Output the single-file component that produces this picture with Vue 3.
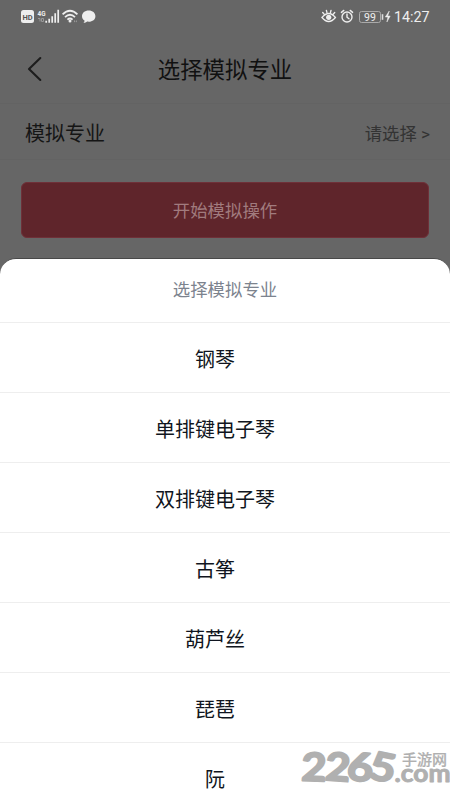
<script setup>
const options = ['钢琴', '单排键电子琴', '双排键电子琴', '古筝', '葫芦丝', '琵琶', '阮']
</script>

<template>
  <main class="screen">
    <header class="status">
      <svg class="status-left" width="76" height="16" viewBox="0 0 76 16">
        <rect x="0" y="2" width="13" height="13" rx="2.5" fill="#eee" />
        <text x="6.5" y="11.5" class="hd" text-anchor="middle">HD</text>
        <text x="16.5" y="7.5" class="net" textLength="8" lengthAdjust="spacingAndGlyphs">4G</text>
        <g fill="none" stroke="#999" stroke-width="1">
          <path d="M17 10.5h2v3M20.5 10.5h2v3h-2z" />
        </g>
        <g stroke="#eee" stroke-width="1.7">
          <path d="M25.2 14.8v-2M28.2 14.8v-4M31.2 14.8v-6.5M34.2 14.8v-9.5M37.2 14.8V1.8" />
        </g>
        <g fill="none" stroke="#eee" stroke-width="1.8">
          <path d="M41.6 6.3q7.4-7 14.8 0M44 9.1q5-4.6 10 0M46.4 11.6q2.6-2.2 5.2 0" />
        </g>
        <circle cx="49" cy="13.1" r="1.5" fill="#eee" />
        <path d="M53 12l1.5 1.2L53 14.4zM56 12l-1.2 1.2L56 14.4z" fill="#999" />
        <path d="M67.7 2.6c3.9 0 6.7 2.4 6.7 5.6s-2.8 5.5-6.7 5.5c-.5 0-1 0-1.5-.1-1 .9-2.2 1.3-3.7 1.4.8-.8 1.1-1.6 1-2.5-1.6-1-2.5-2.5-2.5-4.3 0-3.2 2.8-5.6 6.7-5.6z" fill="#eee" />
      </svg>
      <div class="status-right">
        <svg width="70" height="16" viewBox="0 0 70 16">
          <g fill="none" stroke="#eee" stroke-width="1.4" stroke-linecap="round">
            <path d="M1 9.5q6.7-8 13.4 0q-6.7 8-13.4 0zM1.7 4.5l1.4 1.6M5.4 2.4l.5 2M10 2.4l-.5 2M13.7 4.5l-1.4 1.6" />
            <circle cx="26" cy="9" r="5" />
            <path d="M26 6v3.2l2 1.6M20.4 4.4l2.4-2M31.6 4.4l-2.4-2" />
          </g>
          <circle cx="7.7" cy="9.3" r="2.6" fill="#eee" />
          <rect x="38.5" y="3.5" width="21" height="11" rx="2" fill="none" stroke="#aaa" />
          <path d="M61.5 6.2v5.6" stroke="#ddd" stroke-width="1.6" />
          <text x="49" y="12.8" class="battery" text-anchor="middle">99</text>
          <path d="M68.3 3l-4 6h2.6l-1 5 3.3-6h-2.5z" fill="#eee" stroke="#eee" stroke-width=".5" />
        </svg>
        <span class="clock">14:27</span>
      </div>
    </header>
    <nav class="nav">
      <svg class="back" width="16" height="26" viewBox="0 0 16 26">
        <path d="M13.3 2L2 13l11.3 11" fill="none" stroke="#1d1d1d" stroke-width="2.1" stroke-linecap="round" stroke-linejoin="round" />
      </svg>
      <h1>选择模拟专业</h1>
    </nav>
    <div class="field">
      <span class="label">模拟专业</span>
      <span class="value">请选择 &gt;</span>
    </div>
    <button class="start">开始模拟操作</button>
    <section class="sheet">
      <div class="sheet-title">选择模拟专业</div>
      <ul>
        <li v-for="option in options" :key="option">{{ option }}</li>
      </ul>
    </section>
    <svg class="mark" width="152" height="60" viewBox="298 740 152 60">
      <g class="digits">
        <text x="301.5" y="781" textLength="25" lengthAdjust="spacingAndGlyphs" transform="rotate(2 314 766)">2</text>
        <text x="325.5" y="781" textLength="25" lengthAdjust="spacingAndGlyphs" transform="rotate(4 338 766)">2</text>
        <text x="347.5" y="781" textLength="26" lengthAdjust="spacingAndGlyphs" transform="rotate(5 361 766)">6</text>
        <text x="370" y="781" textLength="26" lengthAdjust="spacingAndGlyphs" transform="rotate(11 383 766)">5</text>
      </g>
      <text class="site" x="402" y="765.3">手游网</text>
      <text class="domain" x="394.5" y="781.5" textLength="56" lengthAdjust="spacingAndGlyphs">.com</text>
    </svg>
  </main>
</template>

<style>
body {
  margin: 0;
  overflow: hidden;
}
</style>

<style scoped>
.screen {
  position: relative;
  display: flex;
  flex-direction: column;
  width: 450px;
  height: 800px;
  overflow: hidden;
  background: #666;
  font-family: Roboto, "Noto Sans CJK SC", sans-serif;
}
.status {
  flex: none;
  display: flex;
  justify-content: space-between;
  height: 34px;
  box-sizing: border-box;
  padding: 8px 21px 0 21px;
}
.status-right {
  display: flex;
  gap: 3px;
}
.clock {
  width: 35px;
  color: #eee;
  font-size: 14.3px;
  line-height: 19px;
  white-space: nowrap;
}
.hd {
  fill: #555;
  font: bold 7.5px Roboto, sans-serif;
}
.net {
  fill: #eee;
  font: bold 8px Roboto, sans-serif;
}
.battery {
  fill: #eee;
  font: 10.5px Roboto, sans-serif;
}
.nav {
  flex: none;
  display: grid;
  grid-template-columns: 50px 1fr 50px;
  align-items: center;
  height: 70px;
  box-sizing: border-box;
  border-bottom: 1px solid #636363;
}
.back {
  margin-left: 27px;
}
h1 {
  margin: 0;
  padding-top: 2px;
  color: #111;
  font-size: 22.4px;
  font-weight: 400;
  line-height: 30px;
  text-align: center;
}
.field {
  flex: none;
  display: flex;
  align-items: center;
  justify-content: space-between;
  height: 56px;
  box-sizing: border-box;
  padding: 1px 20px 0 25px;
  border-bottom: 1px solid #636363;
}
.label {
  color: #151515;
  font-size: 20px;
}
.value {
  color: #333;
  font-size: 17.3px;
}
.start {
  flex: none;
  width: 408px;
  height: 56px;
  margin: 22px 0 0 21px;
  padding: 0 0 2px;
  border: 1px solid #6f3038;
  border-radius: 6px;
  background: #5f252b;
  color: #a17b7e;
  font: 17.4px "Noto Sans CJK SC", sans-serif;
}
.sheet {
  flex: none;
  margin-top: 20px;
  border-top: 1px solid #484848;
  border-radius: 16px 16px 0 0;
  background: #fff;
  text-align: center;
}
.sheet-title {
  height: 63px;
  color: #7c838e;
  font-size: 17.4px;
  line-height: 63px;
}
ul {
  margin: 0;
  padding: 0;
  list-style: none;
}
li {
  height: 70px;
  box-sizing: border-box;
  padding-right: 20px;
  border-top: 1px solid #eee;
  color: #101520;
  font-size: 20px;
  line-height: 75px;
}
.mark {
  position: absolute;
  left: 298px;
  top: 740px;
  overflow: visible;
}
.mark text {
  fill: #b0b0b0;
  stroke: #b0b0b0;
  stroke-linejoin: round;
}
.digits {
  font: bold 39px Lato, sans-serif;
  stroke-width: 2px;
}
.mark .site {
  font: 500 15px "Noto Sans CJK SC", sans-serif;
  stroke-width: .2px;
}
.domain {
  font: bold 24px Lato, sans-serif;
  stroke-width: .9px;
}
</style>
